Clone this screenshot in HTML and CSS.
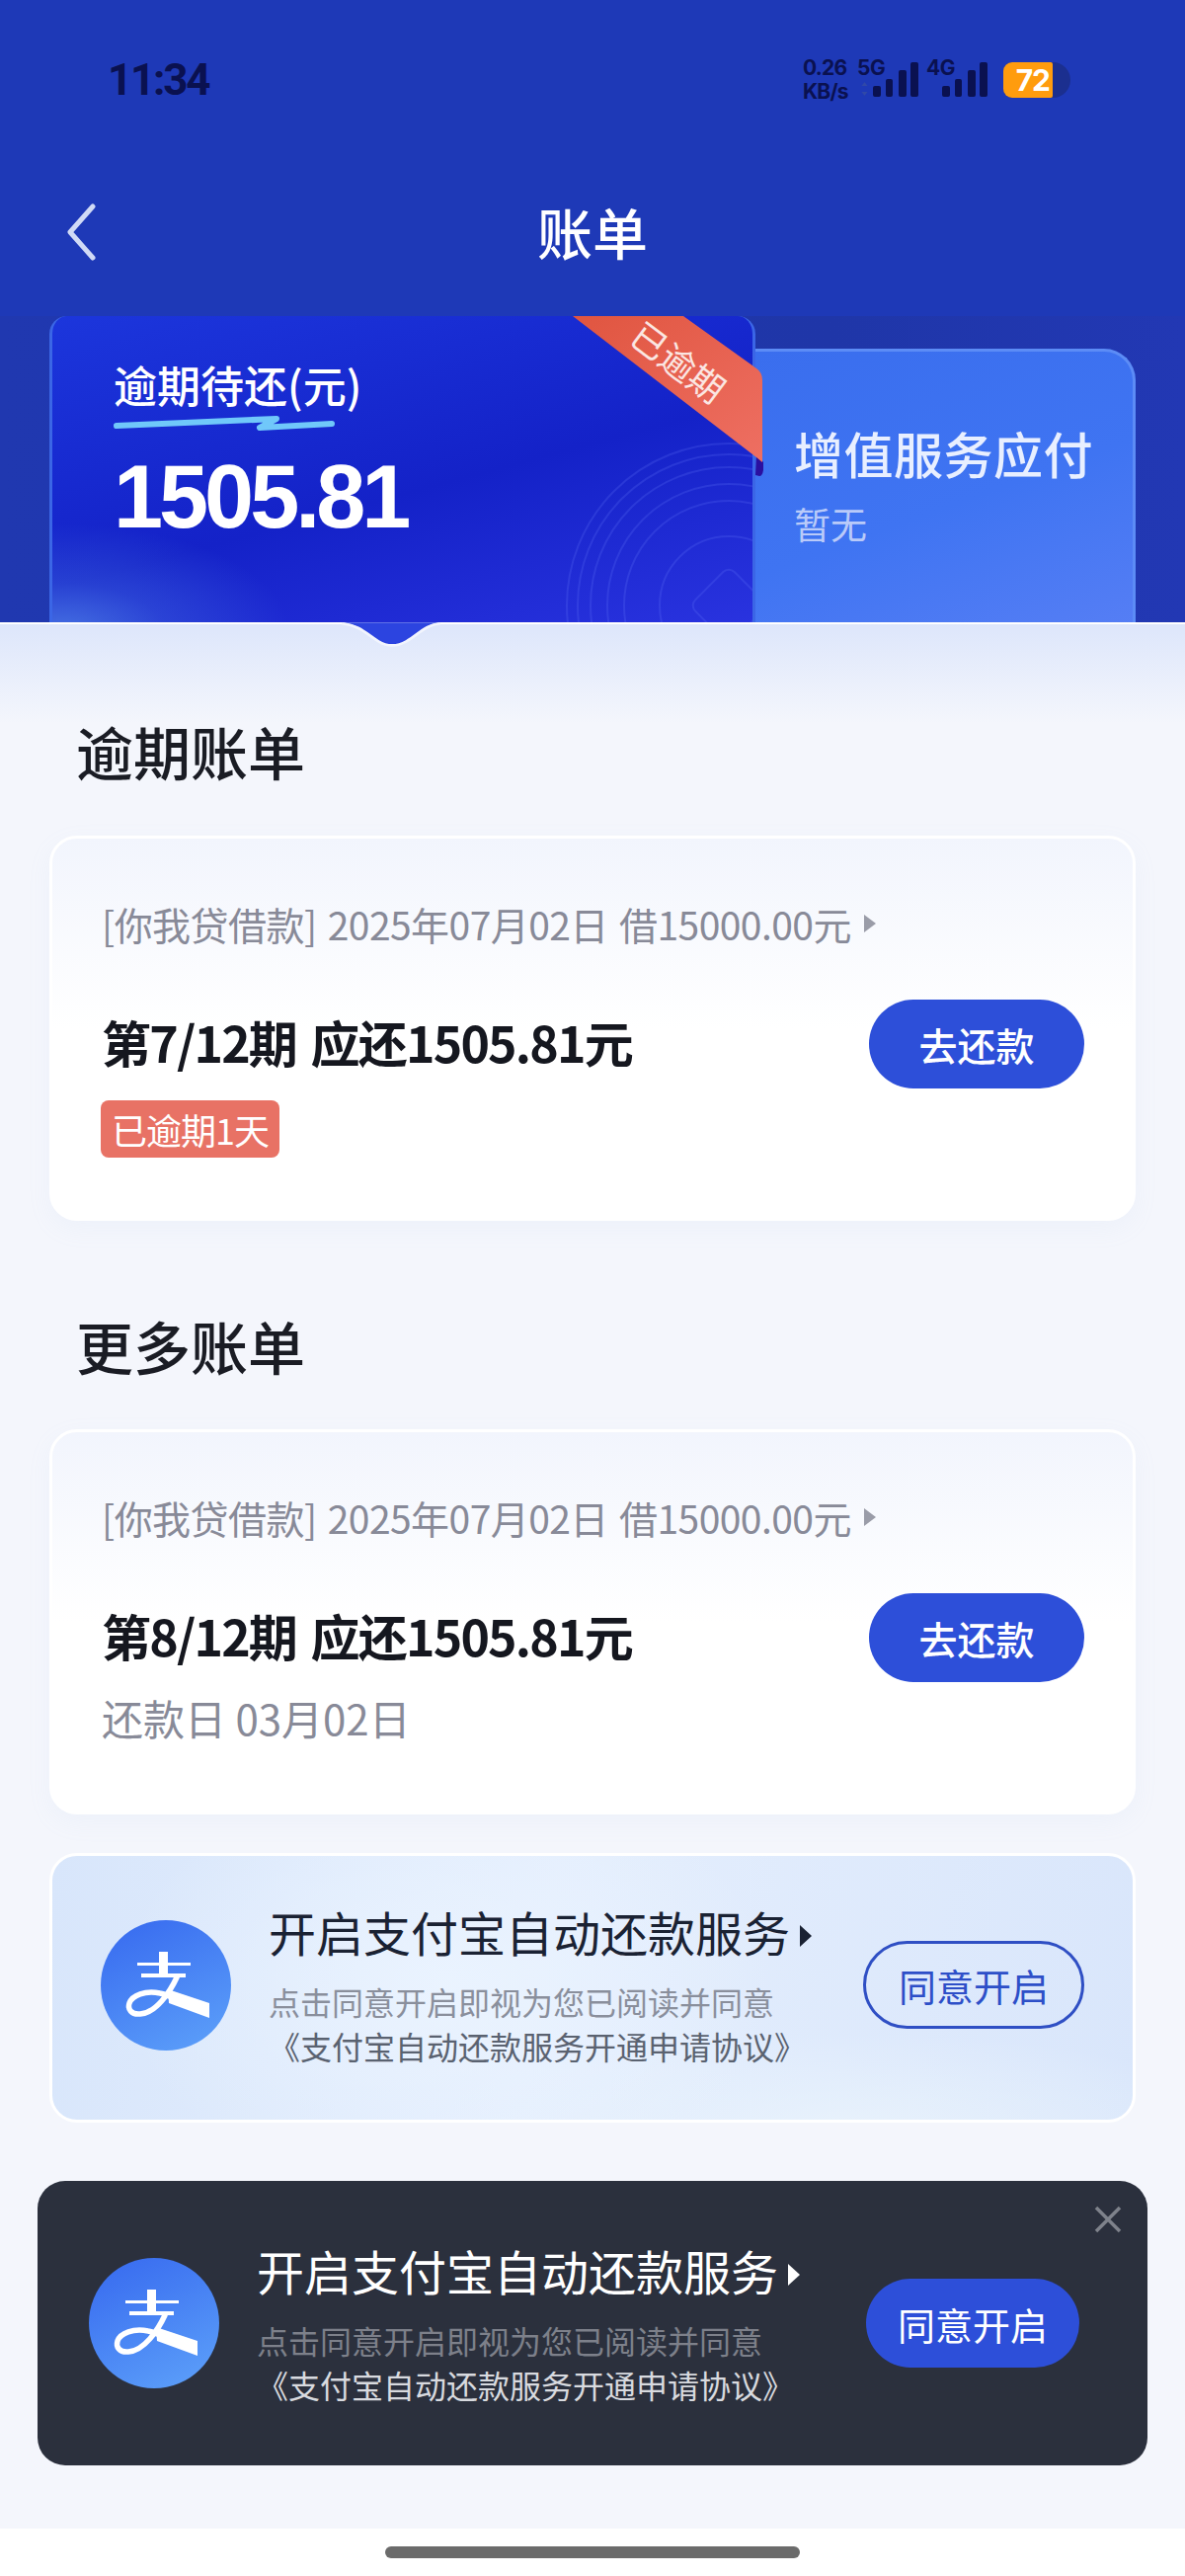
FILE: index.html
```html
<!DOCTYPE html>
<html lang="zh-CN">
<head>
<meta charset="utf-8">
<title>账单</title>
<link rel="stylesheet" href="styles.css">
</head>
<body>
<div class="page">
  <header class="header">
    <div class="status">
      <span class="time">11:34</span>
      <div class="status-right">
        <div class="speed"><span>0.26</span><span>KB/s</span></div>
        <div class="sim sim-one">
          <svg viewBox="0 0 62 38" width="62" height="38">
            <path class="arrow" d="M7.500 23l3 4h-6zM7.500 37l3-4h-6z"/>
            <rect class="bar" x="16" y="27" width="8" height="11" rx="2"/>
            <rect class="bar" x="29" y="20" width="7" height="18" rx="2"/>
            <rect class="bar" x="42" y="11" width="8" height="27" rx="2"/>
            <rect class="bar" x="54" y="3" width="8" height="35" rx="2"/>
          </svg>
          <span class="sim-label">5G</span>
        </div>
        <div class="sim sim-two">
          <svg viewBox="0 0 62 38" width="62" height="38">
            <rect class="bar" x="16" y="27" width="8" height="11" rx="2"/>
            <rect class="bar" x="29" y="20" width="7" height="18" rx="2"/>
            <rect class="bar" x="42" y="11" width="8" height="27" rx="2"/>
            <rect class="bar" x="54" y="3" width="8" height="35" rx="2"/>
          </svg>
          <span class="sim-label">4G</span>
        </div>
        <div class="battery"><span class="battery-level">72</span></div>
      </div>
    </div>
    <nav class="nav">
      <svg class="back" viewBox="0 0 32 58" width="32" height="58"><path d="M28 3L5 29l23 26"/></svg>
      <h1 class="nav-title">账单</h1>
    </nav>
  </header>

  <section class="hero">
    <div class="due-card">
      <svg class="rings" viewBox="0 0 360 360" width="360" height="360">
        <circle cx="180" cy="180" r="70"/>
        <circle cx="180" cy="180" r="106"/>
        <circle cx="180" cy="180" r="123"/>
        <circle cx="180" cy="180" r="140"/>
        <circle cx="180" cy="180" r="153"/>
        <circle cx="180" cy="180" r="164"/>
        <rect x="152" y="152" width="56" height="56" rx="8" transform="rotate(45 180 180)"/>
      </svg>
      <div class="due-label">逾期待还(元)</div>
      <svg class="squiggle" viewBox="0 0 224 16" width="224" height="16"><path d="M3 11L165 4 148 13 221 9"/></svg>
      <div class="due-amount">1505.81</div>
    </div>
    <div class="extra-card">
      <div class="extra-title">增值服务应付</div>
      <div class="extra-sub">暂无</div>
    </div>
    <svg class="ribbon" viewBox="0 0 200 170" width="200" height="170">
      <defs>
        <linearGradient id="ribbonFill" x1="0" y1="0" x2="1" y2="1">
          <stop offset="0" stop-color="#e05540"/>
          <stop offset="1" stop-color="#ee6f62"/>
        </linearGradient>
      </defs>
      <path class="ribbon-fold" d="M186 138l7 10v8q-1 6-4 6l-4-1z"/>
      <path fill="url(#ribbonFill)" d="M0 0H112L186 53q6 4 6 12v83L186 143z"/>
    </svg>
    <span class="ribbon-text">已逾期</span>
  </section>

  <main class="content">
    <svg class="notch" viewBox="0 0 110 28" width="100" height="26">
      <path class="notch-fill" d="M0 0H110C92 2 86 12 72 20Q56 30 41 20C28 12 20 2 0 0z"/>
      <path class="notch-line" d="M0 1C20 3 28 13 41 21Q56 30 72 21C86 13 92 3 110 1"/>
    </svg>

    <h2 class="section-title">逾期账单</h2>
    <article class="bill-card">
      <div class="bill-meta">
        <span>[你我贷借款] 2025年07月02日 借15000.00元</span>
        <i class="tri tri-gray"></i>
      </div>
      <div class="bill-row">
        <span class="bill-due">第7/12期 应还1505.81元</span>
        <button class="pay-btn">去还款</button>
      </div>
      <span class="tag">已逾期1天</span>
    </article>

    <h2 class="section-title section-more">更多账单</h2>
    <article class="bill-card">
      <div class="bill-meta">
        <span>[你我贷借款] 2025年07月02日 借15000.00元</span>
        <i class="tri tri-gray"></i>
      </div>
      <div class="bill-row">
        <span class="bill-due">第8/12期 应还1505.81元</span>
        <button class="pay-btn">去还款</button>
      </div>
      <div class="bill-date">还款日 03月02日</div>
    </article>

    <section class="promo promo-light">
      <svg class="alipay" viewBox="0 0 132 132" width="132" height="132">
        <defs>
          <linearGradient id="alipayA" x1="0.3" y1="0" x2="0.8" y2="1">
            <stop offset="0" stop-color="#3a6ef0"/>
            <stop offset="1" stop-color="#5b9ef9"/>
          </linearGradient>
        </defs>
        <circle cx="66" cy="66" r="66" fill="url(#alipayA)"/>
        <path class="ali-fill" d="M37 43H59V32H68V43H91V46H68V54H86V58H41V54H59V46H37zM68 70L110 84V99L69 84z"/>
        <path class="ali-stroke" d="M77 58C70 73 56 94 40 95 31 96 27 90 29 84 32 76 45 71 60 74 66 75 70 77 76 80"/>
      </svg>
      <div class="promo-text">
        <div class="promo-title">开启支付宝自动还款服务<i class="tri tri-dark"></i></div>
        <div class="promo-sub">点击同意开启即视为您已阅读并同意</div>
        <div class="promo-link">《支付宝自动还款服务开通申请协议》</div>
      </div>
      <button class="agree-outline">同意开启</button>
    </section>

    <section class="promo promo-dark">
      <svg class="close" viewBox="0 0 28 28" width="28" height="28"><path d="M2 2L26 26M26 2L2 26"/></svg>
      <svg class="alipay" viewBox="0 0 132 132" width="132" height="132">
        <circle cx="66" cy="66" r="66" fill="url(#alipayA)"/>
        <path class="ali-fill" d="M37 43H59V32H68V43H91V46H68V54H86V58H41V54H59V46H37zM68 70L110 84V99L69 84z"/>
        <path class="ali-stroke" d="M77 58C70 73 56 94 40 95 31 96 27 90 29 84 32 76 45 71 60 74 66 75 70 77 76 80"/>
      </svg>
      <div class="promo-text">
        <div class="promo-title">开启支付宝自动还款服务<i class="tri tri-white"></i></div>
        <div class="promo-sub">点击同意开启即视为您已阅读并同意</div>
        <div class="promo-link">《支付宝自动还款服务开通申请协议》</div>
      </div>
      <button class="agree-solid">同意开启</button>
    </section>
  </main>

  <footer class="home-bar"><span class="home-handle"></span></footer>
</div>
</body>
</html>
```

FILE: styles.css
```css
* { box-sizing: border-box; margin: 0; padding: 0; }
html, body { width: 1200px; height: 2608px; overflow: hidden; }
body {
  font-family: "Noto Sans CJK SC", "Noto Sans", sans-serif;
  background: #f4f6fc;
  color: #15171f;
}
button { font-family: inherit; border: 0; cursor: pointer; }
i { display: inline-block; }

.page { width: 1200px; height: 2608px; display: flex; flex-direction: column; }

/* header */
.header { height: 320px; background: #1e39b7; flex: none; }
.status {
  height: 154px;
  padding: 60px 116px 0 109px;
  display: flex;
  justify-content: space-between;
  align-items: flex-start;
  color: #0a1150;
}
.time {
  font-family: Roboto, sans-serif;
  font-weight: 700;
  font-size: 44px;
  line-height: 42px;
  letter-spacing: -2.200px;
}
.status-right { display: flex; align-items: flex-start; height: 40px; }
.speed {
  width: 55px;
  display: flex;
  flex-direction: column;
  font-family: Inter, sans-serif;
  font-weight: 700;
  font-size: 21px;
  line-height: 24px;
  letter-spacing: -0.800px;
  white-space: nowrap;
  margin-top: -3px;
}
.sim { position: relative; width: 62px; height: 38px; }
.sim svg { display: block; }
.sim-two { margin-left: 8px; }
.sim-label {
  position: absolute;
  left: 0;
  top: -3px;
  font-family: Inter, sans-serif;
  font-weight: 700;
  font-size: 21px;
  line-height: 24px;
  letter-spacing: -0.500px;
}
.bar { fill: #0a1150; }
.arrow { fill: #3048a8; }
.battery {
  margin-left: 16px;
  margin-top: 3px;
  width: 68px;
  height: 36px;
  border-radius: 9px 18px 18px 9px;
  background: #1b2f8f;
}
.battery-level {
  display: block;
  width: 50px;
  height: 36px;
  padding-right: 3px;
  border-radius: 9px 2px 2px 9px;
  background: #ff9c0e;
  color: #fff;
  font-family: Inter, sans-serif;
  font-weight: 700;
  font-size: 30px;
  line-height: 36px;
  text-align: right;
  letter-spacing: -1px;
}
.nav { position: relative; height: 160px; padding-top: 50px; text-align: center; }
.back { position: absolute; left: 66px; top: 52px; }
.back path { fill: none; stroke: #d0daf6; stroke-width: 5; stroke-linecap: round; stroke-linejoin: round; }
.nav-title { font-size: 56px; line-height: 60px; font-weight: 500; color: #fff; }

/* hero */
.hero {
  position: relative;
  height: 310px;
  flex: none;
  overflow: hidden;
  padding-left: 50px;
  display: flex;
  align-items: flex-start;
  background: linear-gradient(90deg, #2038b0 0, #1f36a8 70%, #2238b4 100%);
}
.due-card {
  position: relative;
  width: 715px;
  height: 340px;
  flex: none;
  overflow: hidden;
  border: solid #3b66e6;
  border-width: 0 3px;
  border-radius: 18px 18px 0 0;
  padding: 43px 0 0 62px;
  background:
    radial-gradient(ellipse 230px 110px at 10px 320px, rgba(74,120,228,.9) 0, rgba(74,120,228,.35) 45%, rgba(74,120,228,0) 100%),
    linear-gradient(165deg, #1c36dc 0, #1422c8 52%, #2c35e2 100%);
}
.rings { position: absolute; left: 505px; top: 113px; }
.rings circle, .rings rect { fill: none; stroke: rgba(110,130,255,.2); stroke-width: 2; }
.due-label { color: #fff; font-size: 44px; line-height: 52px; font-weight: 500; letter-spacing: 0; white-space: nowrap; }
.squiggle { display: block; margin-top: 5px; }
.squiggle path { fill: none; stroke: #70c8fa; stroke-width: 6; stroke-linecap: round; stroke-linejoin: round; }
.due-amount {
  margin-top: 22px;
  color: #fff;
  font-family: "Liberation Sans", Arial, sans-serif;
  font-weight: 700;
  font-size: 90px;
  line-height: 90px;
  letter-spacing: -4px;
}
.extra-card {
  width: 385px;
  height: 320px;
  margin-top: 33px;
  flex: none;
  border: solid #5c8cf6;
  border-width: 3px 3px 0 0;
  border-radius: 0 32px 0 0;
  padding: 72px 0 0 39px;
  background: linear-gradient(160deg, #3a6eee 0, #3f74f2 50%, #5a80f5 100%);
}
.extra-title { color: #e8efff; font-size: 50px; line-height: 60px; font-weight: 500; white-space: nowrap; letter-spacing: .5px; }
.extra-sub { color: #b9caf9; font-size: 37px; line-height: 46px; margin-top: 19px; }
.ribbon { position: absolute; left: 580px; top: 0; }
.ribbon-fold { fill: #2a0fa0; }
.ribbon-text {
  position: absolute;
  left: 634px;
  top: 30px;
  color: #fbe6e2;
  font-size: 36px;
  line-height: 30px;
  white-space: nowrap;
  transform: rotate(37deg);
}

/* content */
.content {
  position: relative;
  flex: 1;
  padding: 92px 50px 0;
  border-top: 2px solid #fff;
  background: linear-gradient(180deg, #dde6fb 0, #f4f6fc 100px);
}
.notch { position: absolute; left: 346px; top: -2px; }
.notch-fill { fill: #2c44e0; }
.notch-line { fill: none; stroke: #f2f5fd; stroke-width: 3; }
.section-title { font-size: 58px; line-height: 72px; font-weight: 500; color: #1a1c24; padding-left: 27px; }
.section-more { margin-top: 90px; }

.bill-card {
  margin-top: 50px;
  height: 390px;
  border: 3px solid #fff;
  border-radius: 28px;
  padding: 61px 49px 0 50px;
  background: linear-gradient(180deg, #f2f5fd 0, #fff 50%);
  box-shadow: 0 8px 24px rgba(170,185,225,.08);
}
.section-more + .bill-card { margin-top: 49px; }
.bill-meta {
  display: flex;
  align-items: center;
  gap: 13px;
  height: 50px;
  color: #888a98;
  font-size: 39px;
  line-height: 50px;
  white-space: nowrap;
  letter-spacing: -.55px;
  word-spacing: 3px;
}
.tri { width: 0; height: 0; border-style: solid; border-color: transparent; }
.tri-gray { border-width: 9px 0 9px 12px; border-left-color: #9a9ca8; }
.tri-dark { border-width: 11px 0 11px 12px; border-left-color: #1a2233; margin-left: 10px; vertical-align: 5px; }
.tri-white { border-width: 11px 0 11px 12px; border-left-color: #fff; margin-left: 10px; vertical-align: 5px; }
.bill-row {
  margin-top: 52px;
  height: 90px;
  display: flex;
  align-items: center;
  justify-content: space-between;
}
.bill-due { font-size: 50px; line-height: 60px; font-weight: 600; letter-spacing: -1.800px; word-spacing: 5px; white-space: nowrap; color: #15171f; margin-top: -6px; }
.pay-btn {
  width: 218px;
  height: 90px;
  border-radius: 45px;
  background: #2d4fd9;
  color: #fff;
  font-size: 39px;
  font-weight: 500;
}
.tag {
  display: inline-block;
  margin-top: 12px;
  margin-left: -1px;
  width: 181px;
  height: 58px;
  border-radius: 8px;
  background: #e87265;
  color: #fff;
  font-size: 36px;
  line-height: 58px;
  text-align: center;
  letter-spacing: -1px;
  white-space: nowrap;
}
.bill-date { margin-top: 11px; color: #888a98; font-size: 42px; line-height: 50px; }

/* promos */
.promo {
  display: flex;
  align-items: center;
  white-space: nowrap;
}
.promo-light {
  margin-top: 39px;
  height: 273px;
  padding: 0 49px 6px 49px;
  gap: 38px;
  border: 3px solid #fff;
  border-radius: 28px;
  background:
    radial-gradient(ellipse 330px 220px at 400px 130px, rgba(235,244,255,.9) 0, rgba(235,244,255,0) 100%),
    radial-gradient(ellipse 420px 90px at 800px 270px, rgba(232,242,252,.9) 0, rgba(232,242,252,0) 100%),
    linear-gradient(100deg, #d8e6fb 0, #e4eefd 45%, #d9e6fb 100%);
}
.promo-dark {
  position: relative;
  margin: 59px -12px 0;
  height: 288px;
  padding: 0 69px 0 52px;
  gap: 38px;
  border-radius: 28px;
  background: #2b303d;
  color: #fff;
}
.alipay { flex: none; display: block; }
.ali-fill { fill: #fff; }
.ali-stroke { fill: none; stroke: #fff; stroke-width: 5.500; stroke-linecap: round; }
.promo-text { flex: 1; min-width: 0; }
.promo-title { font-size: 48px; line-height: 58px; letter-spacing: 0; color: #1a2233; }
.promo-sub { margin-top: 19px; font-size: 32px; line-height: 46px; color: #8a8f9c; }
.promo-link { font-size: 32px; line-height: 44px; color: #5a6270; }
.promo-dark .promo-title { color: #fff; }
.promo-dark .promo-sub { color: #7d808a; }
.promo-dark .promo-link { color: #d8dadf; }
.agree-outline {
  flex: none;
  width: 224px;
  height: 89px;
  border: 3px solid #2f4fc4;
  border-radius: 45px;
  background: transparent;
  color: #2d4fc8;
  font-size: 38px;
}
.agree-solid {
  flex: none;
  width: 216px;
  height: 90px;
  border-radius: 45px;
  background: #2d4fd9;
  color: #fff;
  font-size: 38px;
}
.close { position: absolute; right: 26px; top: 25px; }
.close path { fill: none; stroke: #7e828b; stroke-width: 3.500; }

/* home bar */
.home-bar {
  height: 48px;
  flex: none;
  background: #fff;
  display: flex;
  justify-content: center;
  padding-top: 18px;
}
.home-handle { width: 420px; height: 12px; border-radius: 6px; background: #6b6b6b; }
```
